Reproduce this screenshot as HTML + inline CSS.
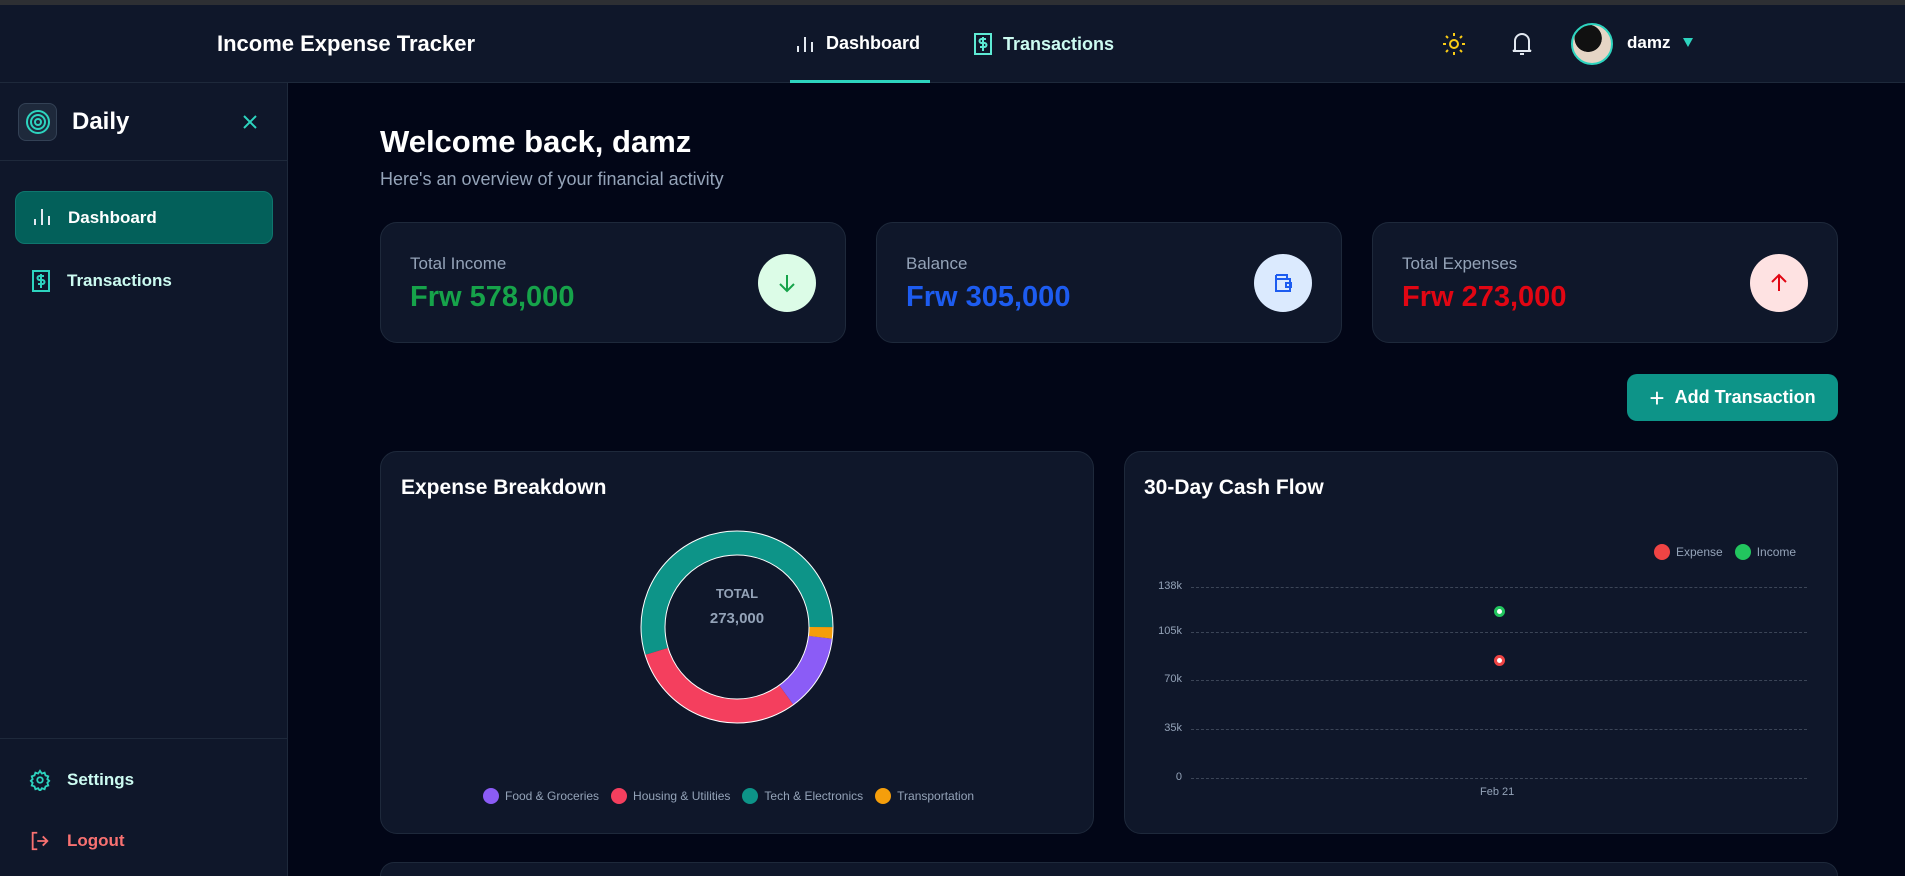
<!DOCTYPE html>
<html style="width:1905px;height:876px;overflow:hidden"><head><meta charset="utf-8"><style>
*{box-sizing:border-box;margin:0;padding:0}
body{width:1905px;height:876px;overflow:hidden;background:#020617;font-family:"Liberation Sans",sans-serif;color:#fff;position:relative}
.abs{position:absolute}
.top{left:0;top:0;width:1905px;height:83px;background:#0f172a;border-bottom:1px solid #1e293b}
.strip{left:0;top:0;width:1905px;height:5px;background:#2d2f33}
.side{left:0;top:83px;width:288px;height:793px;background:#0f172a;border-right:1px solid #1e293b}
.card{background:#0f172a;border:1px solid #1e293b;border-radius:17px}
.lbl{font-size:17px;color:#94a3b8}
.val{font-size:29px;font-weight:bold}
.circ{width:58px;height:58px;border-radius:50%;display:flex;align-items:center;justify-content:center}
.leg{font-size:12px;color:#94a3b8;display:flex;align-items:center}
.dot{width:16px;height:16px;border-radius:50%;display:inline-block;margin-right:6px}
.yl{font-size:11px;color:#94a3b8;text-align:right;width:40px}
.gl{height:0;border-top:1px dashed #3b4557;width:616px;left:1191px}
</style></head><body>
<div class="abs top"></div><div class="abs strip"></div>
<div class="abs" style="left:217px;top:31px;font-size:22px;font-weight:bold">Income Expense Tracker</div>
<svg class="abs" style="left:795px;top:34px" width="20" height="20" viewBox="0 0 20 20" stroke="#e2e8f0" stroke-width="2"><path d="M3 18v-6M10 18V3M17 18v-10"/></svg>
<div class="abs" style="left:826px;top:33px;font-size:18px;font-weight:bold">Dashboard</div>
<div class="abs" style="left:790px;top:80px;width:140px;height:3px;background:#2dd4bf"></div>
<svg class="abs" style="left:973px;top:33px" width="20" height="22" viewBox="0 0 20 22" fill="none" stroke="#5eead4" stroke-width="2"><rect x="2" y="1" width="16" height="20"/><path d="M13 6H8.5a2 2 0 0 0 0 4h3a2 2 0 0 1 0 4H7M10 4v14"/></svg>
<div class="abs" style="left:1003px;top:34px;font-size:18px;font-weight:bold;color:#ccfbf1">Transactions</div>
<svg class="abs" style="left:1442px;top:32px" width="24" height="24" viewBox="0 0 24 24" fill="none" stroke="#facc15" stroke-width="2"><circle cx="12" cy="12" r="4"/><path d="M12 1v3M12 20v3M1 12h3M20 12h3M4 4l2 2M18 18l2 2M4 20l2-2M18 6l2-2"/></svg>
<svg class="abs" style="left:1510px;top:31px" width="24" height="26" viewBox="0 0 24 26" fill="none" stroke="#e2e8f0" stroke-width="2"><path d="M5 19V10a7 7 0 0 1 14 0v9l2 1H3zM10 23h4"/></svg>
<div class="abs" style="left:1571px;top:23px;width:42px;height:42px;border-radius:50%;border:2px solid #2dd4bf;background:radial-gradient(circle at 40% 35%,#111 0 40%,#e5d5c5 41% 100%)"></div>
<div class="abs" style="left:1627px;top:33px;font-size:17px;font-weight:bold">damz</div>
<div class="abs" style="left:1683px;top:38px;width:0;height:0;border-left:5px solid transparent;border-right:5px solid transparent;border-top:9px solid #2dd4bf"></div>

<div class="abs side"></div>
<div class="abs" style="left:18px;top:103px;width:39px;height:38px;border-radius:8px;background:#1e293b;border:1px solid #334155;display:flex;align-items:center;justify-content:center"><svg width="26" height="26" viewBox="0 0 26 26" fill="none" stroke="#2dd4bf" stroke-width="2"><circle cx="13" cy="13" r="11"/><circle cx="13" cy="13" r="7"/><circle cx="13" cy="13" r="3"/></svg></div>
<div class="abs" style="left:72px;top:108px;font-size:24px;font-weight:bold">Daily</div>
<svg class="abs" style="left:242px;top:114px" width="16" height="16" viewBox="0 0 16 16" stroke="#2dd4bf" stroke-width="2"><path d="M2 2l12 12M14 2L2 14"/></svg>
<div class="abs" style="left:0;top:160px;width:288px;height:1px;background:#1e293b"></div>
<div class="abs" style="left:15px;top:191px;width:258px;height:53px;border-radius:10px;background:#03605a;border:1px solid #0f766e"></div>
<svg class="abs" style="left:32px;top:207px" width="20" height="20" viewBox="0 0 20 20" stroke="#e2e8f0" stroke-width="2"><path d="M3 18v-6M10 18V2M17 18v-9"/></svg>
<div class="abs" style="left:68px;top:208px;font-size:17px;font-weight:bold">Dashboard</div>
<svg class="abs" style="left:31px;top:270px" width="20" height="22" viewBox="0 0 20 22" fill="none" stroke="#2dd4bf" stroke-width="2"><rect x="2" y="1" width="16" height="20"/><path d="M13 6H8.5a2 2 0 0 0 0 4h3a2 2 0 0 1 0 4H7M10 4v14"/></svg>
<div class="abs" style="left:67px;top:271px;font-size:17px;font-weight:bold;color:#ccfbf1">Transactions</div>
<div class="abs" style="left:0;top:738px;width:288px;height:1px;background:#1e293b"></div>
<svg class="abs" style="left:29px;top:769px" width="22" height="22" viewBox="0 0 24 24" fill="none" stroke="#2dd4bf" stroke-width="2"><circle cx="12" cy="12" r="3"/><path d="M12 2l2 3 3-1 1 3 3 1-1 3 2 2-2 2 1 3-3 1-1 3-3-1-2 3-2-3-3 1-1-3-3-1 1-3-2-2 2-2-1-3 3-1 1-3 3 1z"/></svg>
<div class="abs" style="left:67px;top:770px;font-size:17px;font-weight:bold;color:#ccfbf1">Settings</div>
<svg class="abs" style="left:29px;top:830px" width="22" height="22" viewBox="0 0 24 24" fill="none" stroke="#f87171" stroke-width="2"><path d="M9 3H4v18h5M15 7l5 5-5 5M20 12H9"/></svg>
<div class="abs" style="left:67px;top:831px;font-size:17px;font-weight:bold;color:#f87171">Logout</div>

<div class="abs" style="left:380px;top:124px;font-size:31px;font-weight:bold">Welcome back, damz</div>
<div class="abs" style="left:380px;top:169px;font-size:18px;color:#94a3b8">Here's an overview of your financial activity</div>

<div class="abs card" style="left:380px;top:222px;width:466px;height:121px"></div>
<div class="abs lbl" style="left:410px;top:254px">Total Income</div>
<div class="abs val" style="left:410px;top:281px;color:#16a34a">Frw 578,000</div>
<div class="abs circ" style="left:758px;top:254px;background:#dcfce7"><svg width="22" height="22" viewBox="0 0 22 22" fill="none" stroke="#16a34a" stroke-width="2"><path d="M11 3v16M4 12l7 7 7-7"/></svg></div>

<div class="abs card" style="left:876px;top:222px;width:466px;height:121px"></div>
<div class="abs lbl" style="left:906px;top:254px">Balance</div>
<div class="abs val" style="left:906px;top:281px;color:#1d5cf0">Frw 305,000</div>
<div class="abs circ" style="left:1254px;top:254px;background:#dbeafe"><svg width="24" height="24" viewBox="0 0 24 24" fill="none" stroke="#1d5cf0" stroke-width="2"><path d="M5 4h11v4M5 4v16h14V8H5"/><rect x="15" y="12" width="5" height="4"/></svg></div>

<div class="abs card" style="left:1372px;top:222px;width:466px;height:121px"></div>
<div class="abs lbl" style="left:1402px;top:254px">Total Expenses</div>
<div class="abs val" style="left:1402px;top:281px;color:#e10613">Frw 273,000</div>
<div class="abs circ" style="left:1750px;top:254px;background:#fee2e2"><svg width="22" height="22" viewBox="0 0 22 22" fill="none" stroke="#e10613" stroke-width="2"><path d="M11 19V3M4 10l7-7 7 7"/></svg></div>

<div class="abs" style="left:1627px;top:374px;width:211px;height:47px;border-radius:10px;background:#0d9488;display:flex;align-items:center;justify-content:center;font-size:18px;font-weight:bold"><span style="font-size:26px;font-weight:normal;margin-right:10px;line-height:1">+</span>Add Transaction</div>

<div class="abs card" style="left:380px;top:451px;width:714px;height:383px"></div>
<div class="abs" style="left:401px;top:476px;font-size:21px;font-weight:bold">Expense Breakdown</div>
<svg class="abs" style="left:637px;top:527px" width="200" height="200" viewBox="0 0 200 200">
<g transform="rotate(-90 100 100)" fill="none" stroke-width="24">
<circle cx="100" cy="100" r="84" stroke="#0d9488" stroke-dasharray="157 1000" stroke-dashoffset="-370.9"/>
<circle cx="100" cy="100" r="84" stroke="#0d9488" stroke-dasharray="132 1000" stroke-dashoffset="0"/>
<circle cx="100" cy="100" r="84" stroke="#f43f5e" stroke-dasharray="159.8 1000" stroke-dashoffset="-211.1"/>
<circle cx="100" cy="100" r="84" stroke="#8b5cf6" stroke-dasharray="68.9 1000" stroke-dashoffset="-142.2"/>
<circle cx="100" cy="100" r="84" stroke="#f59e0b" stroke-dasharray="10.3 1000" stroke-dashoffset="-131.95"/>
</g>
<circle cx="100" cy="100" r="96" fill="none" stroke="#fff" stroke-width="1"/>
<circle cx="100" cy="100" r="72" fill="none" stroke="#fff" stroke-width="1"/>
<text x="100" y="71" text-anchor="middle" font-family="Liberation Sans" font-size="13" font-weight="bold" fill="#94a3b8">TOTAL</text>
<text x="100" y="96" text-anchor="middle" font-family="Liberation Sans" font-size="15" font-weight="bold" fill="#94a3b8">273,000</text>
</svg>
<div class="abs leg" style="left:483px;top:788px"><span class="dot" style="background:#8b5cf6"></span>Food &amp; Groceries<span class="dot" style="background:#f43f5e;margin-left:12px"></span>Housing &amp; Utilities<span class="dot" style="background:#0d9488;margin-left:12px"></span>Tech &amp; Electronics<span class="dot" style="background:#f59e0b;margin-left:12px"></span>Transportation</div>

<div class="abs card" style="left:1124px;top:451px;width:714px;height:383px"></div>
<div class="abs" style="left:1144px;top:476px;font-size:21px;font-weight:bold">30-Day Cash Flow</div>
<div class="abs leg" style="left:1654px;top:544px"><span class="dot" style="background:#ef4444"></span>Expense<span class="dot" style="background:#22c55e;margin-left:12px"></span>Income</div>
<div class="abs yl" style="left:1142px;top:580px">138k</div><div class="abs gl" style="top:587px"></div>
<div class="abs yl" style="left:1142px;top:625px">105k</div><div class="abs gl" style="top:632px"></div>
<div class="abs yl" style="left:1142px;top:673px">70k</div><div class="abs gl" style="top:680px"></div>
<div class="abs yl" style="left:1142px;top:722px">35k</div><div class="abs gl" style="top:729px"></div>
<div class="abs yl" style="left:1142px;top:771px">0</div><div class="abs gl" style="top:778px"></div>
<div class="abs" style="left:1494px;top:606px;width:11px;height:11px;border-radius:50%;border:3px solid #22c55e;background:#fff"></div>
<div class="abs" style="left:1494px;top:655px;width:11px;height:11px;border-radius:50%;border:3px solid #ef4444;background:#fff"></div>
<div class="abs" style="left:1480px;top:786px;font-size:11px;color:#94a3b8">Feb 21</div>

<div class="abs" style="left:380px;top:862px;width:1458px;height:14px;background:#0f172a;border:1px solid #1e293b;border-bottom:none;border-radius:17px 17px 0 0"></div>
</body></html>
